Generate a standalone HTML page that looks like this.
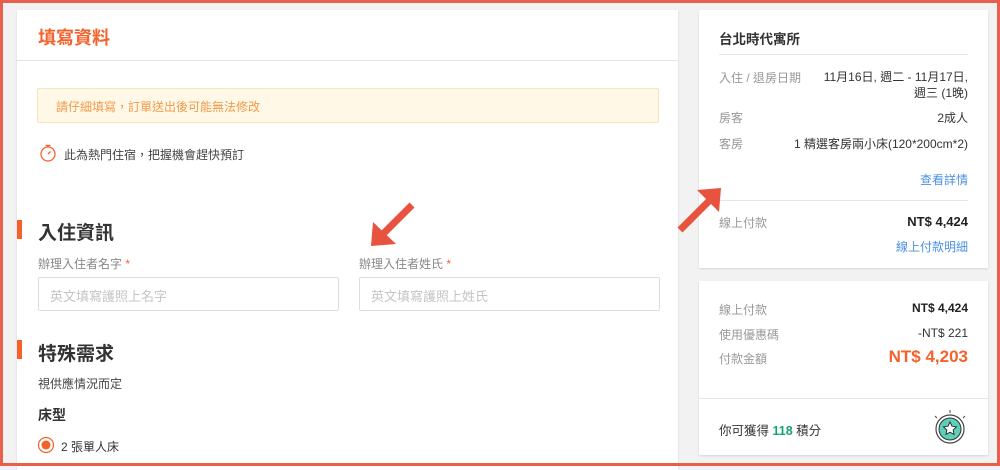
<!DOCTYPE html>
<html><head><meta charset="utf-8"><style>
*{box-sizing:border-box;margin:0;padding:0}
body{width:1000px;height:466px;overflow:hidden;background:#f2f2f2;font-family:"Liberation Sans","Noto Sans CJK TC",sans-serif;color:#333;position:relative}
.frame{position:absolute;inset:0;border:3px solid #e8604c;z-index:5;pointer-events:none}
.card{position:absolute;background:#fff;box-shadow:0 1px 2px rgba(0,0,0,.12)}
.abs{position:absolute;white-space:nowrap}
.bar{position:absolute;left:17px;width:5px;background:#f4622b}
.inp{position:absolute;height:34px;border:1px solid #ddd;border-radius:2px;font-size:13px;color:#c4c4c4;padding:8px 11px}
.lbl{font-size:12px;color:#888}
.g{color:#999;font-size:12px}
</style></head><body>
<div class="frame"></div>
<div class="card" style="left:17px;top:10px;width:661px;height:460px"></div>
<div class="abs" style="left:17px;top:60px;width:661px;height:1px;background:#e5e5e5"></div>
<div class="abs" style="left:38px;top:24px;font-size:18px;font-weight:bold;color:#f4622b">填寫資料</div>
<div class="abs" style="left:37px;top:88px;width:622px;height:35px;background:#fff8e6;border:1px solid #f8e4b8;border-radius:2px"></div>
<div class="abs" style="left:56px;top:98px;font-size:12px;color:#f09a4c">請仔細填寫，訂單送出後可能無法修改</div>
<svg class="abs" style="left:39px;top:143px" width="18" height="19" viewBox="0 0 18 19"><circle cx="9" cy="11" r="7" fill="none" stroke="#f4622b" stroke-width="1.3"/><path d="M6.5 2.5h5M9 2.5v1.5" stroke="#f4622b" stroke-width="1.3"/><path d="M9 11l2.5-2.5" stroke="#f4622b" stroke-width="1.4"/></svg>
<div class="abs" style="left:64px;top:146px;font-size:12px;color:#444">此為熱門住宿，把握機會趕快預訂</div>
<div class="bar" style="top:220px;height:19px"></div>
<div class="abs" style="left:38px;top:218px;font-size:19px;font-weight:bold;color:#333">入住資訊</div>
<div class="abs lbl" style="left:38px;top:255px">辦理入住者名字 <span style="color:#f4622b">*</span></div>
<div class="abs lbl" style="left:359px;top:255px">辦理入住者姓氏 <span style="color:#f4622b">*</span></div>
<div class="inp" style="left:38px;top:277px;width:301px">英文填寫護照上名字</div>
<div class="inp" style="left:359px;top:277px;width:301px">英文填寫護照上姓氏</div>
<div class="bar" style="top:340px;height:19px"></div>
<div class="abs" style="left:38px;top:339px;font-size:19px;font-weight:bold;color:#333">特殊需求</div>
<div class="abs" style="left:38px;top:375px;font-size:12px;color:#444">視供應情況而定</div>
<div class="abs" style="left:38px;top:405px;font-size:14px;font-weight:bold;color:#333">床型</div>
<svg class="abs" style="left:37px;top:436px" width="18" height="18"><circle cx="9" cy="9" r="7.5" fill="none" stroke="#f4622b" stroke-width="1.2"/><circle cx="9" cy="9" r="4.5" fill="#f4622b"/></svg>
<div class="abs" style="left:61px;top:438px;font-size:12px;color:#333">2 張單人床</div>
<div class="card" style="left:699px;top:10px;width:289px;height:258px"></div>
<div class="abs" style="left:719px;top:28px;font-size:13.5px;font-weight:bold;color:#333">台北時代寓所</div>
<div class="abs" style="left:719px;top:54px;width:249px;height:1px;background:#e5e5e5"></div>
<div class="abs g" style="left:719px;top:69px">入住 / 退房日期</div>
<div class="abs" style="right:32px;top:69px;font-size:12px;text-align:right;line-height:16px;color:#333">11月16日, 週二 - 11月17日,<br>週三 (1晚)</div>
<div class="abs g" style="left:719px;top:109px">房客</div>
<div class="abs" style="right:32px;top:109px;font-size:12px">2成人</div>
<div class="abs g" style="left:719px;top:135px">客房</div>
<div class="abs" style="right:32px;top:135px;font-size:12px">1 精選客房兩小床(120*200cm*2)</div>
<div class="abs" style="right:32px;top:171px;font-size:12px;color:#4a90e2">查看詳情</div>
<div class="abs" style="left:719px;top:200px;width:249px;height:1px;background:#e5e5e5"></div>
<div class="abs g" style="left:719px;top:214px">線上付款</div>
<div class="abs" style="right:32px;top:214px;font-size:13px;font-weight:bold;color:#222">NT$ 4,424</div>
<div class="abs" style="right:32px;top:238px;font-size:12px;color:#4a90e2">線上付款明細</div>
<div class="card" style="left:699px;top:281px;width:289px;height:174px"></div>
<div class="abs g" style="left:719px;top:301px">線上付款</div>
<div class="abs" style="right:32px;top:301px;font-size:12px;font-weight:bold;color:#222">NT$ 4,424</div>
<div class="abs g" style="left:719px;top:326px">使用優惠碼</div>
<div class="abs" style="right:32px;top:326px;font-size:12px;color:#333">-NT$ 221</div>
<div class="abs g" style="left:719px;top:350px">付款金額</div>
<div class="abs" style="right:32px;top:347px;font-size:17px;font-weight:bold;color:#f4622b">NT$ 4,203</div>
<div class="abs" style="left:699px;top:398px;width:289px;height:1px;background:#e5e5e5"></div>
<div class="abs" style="left:719px;top:420px;font-size:12.5px;color:#333">你可獲得 <span style="color:#1aa073;font-weight:bold">118</span> 積分</div>
<svg class="abs" style="left:930px;top:408px" width="40" height="40" viewBox="0 0 40 40"><path d="M20 2v3M5 8l2 2M35 8l-2 2" stroke="#444" stroke-width="1"/><circle cx="20" cy="21" r="14" fill="#fff" stroke="#444" stroke-width="1.2"/><circle cx="20" cy="21" r="11" fill="#5cd0b8" stroke="#333" stroke-width="1"/><path d="M20 14l2 4.2 4.5.6-3.3 3.1.8 4.5-4-2.2-4 2.2.8-4.5-3.3-3.1 4.5-.6z" fill="#fff" stroke="#333" stroke-width="1"/></svg>
<svg class="abs" style="left:0;top:0;z-index:4" width="1000" height="466"><path d="M412 205L380 237" stroke="#e8533f" stroke-width="7"/><path d="M371 246L373 222L396 244Z" fill="#e8533f"/><path d="M680 230L712 198" stroke="#e8533f" stroke-width="7"/><path d="M721 188L719 212L697 190Z" fill="#e8533f"/></svg>
</body></html>
